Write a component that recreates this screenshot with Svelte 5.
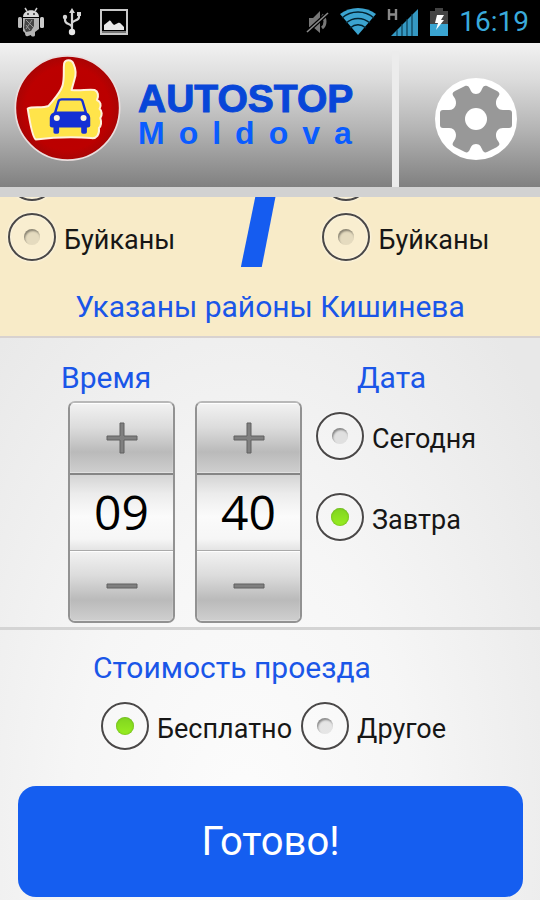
<script lang="ts">
	// Form state
	let from = '';
	let to = '';
	let hours = 9;
	let minutes = 40;
	let day = 'tomorrow';
	let price = 'free';

	const days = [
		{ value: 'today', title: 'Сегодня' },
		{ value: 'tomorrow', title: 'Завтра' }
	];

	const prices = [
		{ value: 'free', title: 'Бесплатно' },
		{ value: 'other', title: 'Другое' }
	];

	// One quarter of the gear, mirrored into the other three
	const gearQuarter =
		'M-1 1V-25H0C4-25 5-28 6-30C7-33 9-34 11-33L21-28C24-26 24-25 22-22C18-17 20-9 27-9H33Q36-9 36-6V1Z';

	const pad = (n: number) => String(n).padStart(2, '0');

	function changeHours(step: number) {
		hours = (hours + step + 24) % 24;
	}

	function changeMinutes(step: number) {
		minutes = (minutes + step + 60) % 60;
	}
</script>

<div class="screen">
	<!-- Status bar -->
	<div class="status-bar">
		<div class="status-left">
			<svg width="26" height="30" viewBox="0 0 26 30">
				<path d="M7 1l2 3M19 1l-2 3" stroke="#ccc" stroke-width="1.5" />
				<path d="M5 10c0-9 16-9 16 0z" fill="#d8d8d8" />
				<rect x="0" y="10" width="4" height="11" rx="1.5" fill="#bbb" />
				<rect x="22" y="10" width="4" height="11" rx="1.5" fill="#ccc" />
				<path d="M5 11h16v11l-4 3v3c0 2-4 2-4 0l-3 1c-2 1-3-1-3-3l-2-2z" fill="#b4b4b4" />
				<path d="M7 12h9v7l-3 5-5 1-2-4z" fill="#454545" />
				<path d="M8 13l7 7M14 13l-6 9M8 18l4 5" stroke="#999" stroke-width="1" />
				<circle cx="10" cy="7" r="1" fill="#333" />
				<circle cx="16" cy="7" r="1" fill="#333" />
			</svg>
			<svg width="20" height="28" viewBox="0 0 20 28" fill="none" stroke="#d5d5d5" stroke-width="2.2">
				<path d="M10 4v19M10 19c-1-4-7-2-7-7V9M10 15c1-3 7-2 7-6V6" />
				<path d="M10 0l3 5H7z" fill="#d5d5d5" stroke="none" />
				<circle cx="3" cy="9" r="2.2" fill="#d5d5d5" stroke="none" />
				<rect x="15" y="4" width="4" height="4" fill="#d5d5d5" stroke="none" />
				<circle cx="10" cy="24" r="3.2" fill="#e8e8e8" stroke="none" />
			</svg>
			<svg width="28" height="26" viewBox="0 0 28 26">
				<rect x="1" y="1" width="26" height="24" fill="#000" stroke="#c8c8c8" stroke-width="2" />
				<path d="M4 21v-5l5-4c1-1 2 0 3 2l2 2 4-2c2-1 3 1 6 4v3z" fill="#e8e8e8" />
				<path d="M2 23h24" stroke="#777" stroke-width="2" />
			</svg>
		</div>
		<div class="status-right">
			<svg width="23" height="24" viewBox="0 0 23 24">
				<path d="M3 8h4l7-7v22l-7-6H3z" fill="#777" />
				<path d="M16 5c4 3 4 10 0 13" fill="none" stroke="#777" stroke-width="3" />
				<path d="M1 22L22 3" stroke="#000" stroke-width="4" />
				<path d="M1 22L22 3" stroke="#8a8a8a" stroke-width="1.6" />
			</svg>
			<svg width="36" height="27" viewBox="0 0 36 27">
				<path d="M0 6c10-8 26-8 36 0L18 27z" fill="#3ba4d0" />
				<path
					d="M2 10c9-8 23-8 32 0M6 15c7-6 17-6 24 0M10 20c5-4 11-4 16 0"
					fill="none"
					stroke="#03222f"
					stroke-width="1.4"
				/>
			</svg>
			<svg width="32" height="28" viewBox="0 0 32 28">
				<path d="M2 1v11M9 1v11M2 6.5h7" stroke="#8a8a8a" stroke-width="2.4" />
				<path d="M4 28L31 1v27z" fill="#3598c2" />
				<path d="M10 22v6M15 16v12M20 11v17M25 6v22" stroke="#0a3c52" stroke-width="1.2" />
			</svg>
			<svg width="18" height="28" viewBox="0 0 18 28">
				<path d="M5 0h8v3h5v25H0V3h5z" fill="#444" />
				<path d="M0 16h18v12H0z" fill="#3aa5d2" />
				<path d="M7 7h7l-3 5h3L6 22l2-7H5z" fill="#fff" />
			</svg>
			<span class="clock">16:19</span>
		</div>
	</div>

	<!-- App header -->
	<header class="header">
		<svg class="logo" viewBox="43 43 320 322">
			<defs>
				<radialGradient id="logo-red">
					<stop offset="0" stop-color="#b80000" />
					<stop offset="0.8" stop-color="#bc0000" />
					<stop offset="1" stop-color="#a80404" />
				</radialGradient>
			</defs>
			<circle cx="203" cy="204" r="156" fill="url(#logo-red)" stroke="#eadede" stroke-width="5" />
			<path
				d="M193 70C197 58 216 58 221 72C228 88 229 104 224 118L215 150C238 153 262 148 284 150C295 154 297 168 291 180C302 184 305 196 299 206C307 213 307 226 301 234C305 246 303 258 297 264C299 284 290 296 274 294C220 290 160 292 108 298C98 292 88 232 84 206C98 198 128 206 146 198C160 180 180 162 188 138C195 112 190 90 193 70Z"
				fill="#ffe44a"
				stroke="#fff1dc"
				stroke-width="6"
				stroke-linejoin="round"
			/>
			<path
				d="M166 218L176 184Q178 178 186 178H240Q246 178 248 184L258 218Z"
				fill="#ffe44a"
				stroke="#1430d4"
				stroke-width="7"
			/>
			<path
				d="M164 216H258Q271 222 271 234V256Q271 262 264 262H157Q150 262 150 256V234Q150 222 164 216Z"
				fill="#1430d4"
			/>
			<rect x="161" y="250" width="17" height="31" rx="5" fill="#1430d4" />
			<rect x="244" y="250" width="17" height="31" rx="5" fill="#1430d4" />
			<circle cx="171" cy="234" r="9" fill="#fff6d8" />
			<circle cx="251" cy="234" r="9" fill="#fff6d8" />
		</svg>
		<div class="brand">
			<span class="brand-name">AUTOSTOP</span>
			<span class="brand-country">Moldova</span>
		</div>
		<button class="settings" aria-label="Настройки">
			<svg width="82" height="82" viewBox="-41 -41 82 82">
				<circle r="41" fill="#fff" />
				{#each ['1 1', '-1 1', '1 -1', '-1 -1'] as mirror}
					<path d={gearQuarter} fill="#989898" transform="scale({mirror})" />
				{/each}
				<circle r="11" fill="#fff" />
			</svg>
		</button>
	</header>

	<!-- Districts -->
	<section class="districts">
		<div class="route">
			<div class="list">
				<label class="option"><input type="radio" name="from" value="prev" bind:group={from} /></label>
				<label class="option">
					<input type="radio" name="from" value="buiucani" bind:group={from} />
					<span>Буйканы</span>
				</label>
			</div>
			<div class="slash"></div>
			<div class="list">
				<label class="option"><input type="radio" name="to" value="prev" bind:group={to} /></label>
				<label class="option">
					<input type="radio" name="to" value="buiucani" bind:group={to} />
					<span>Буйканы</span>
				</label>
			</div>
		</div>
		<h2>Указаны районы Кишинева</h2>
	</section>

	<!-- Time and date -->
	<section class="when">
		<div class="time">
			<h2>Время</h2>
			<div class="pickers">
				<div class="picker">
					<button aria-label="+" on:click={() => changeHours(1)}>
						<svg width="32" height="32" viewBox="0 0 32 32"><path d="M14 1h4v13h13v4H18v13h-4V18H1v-4h13z" /></svg>
					</button>
					<input type="text" aria-label="Время" readonly value={pad(hours)} />
					<button aria-label="−" on:click={() => changeHours(-1)}>
						<svg width="32" height="32" viewBox="0 0 32 32"><path d="M1 14h30v4H1z" /></svg>
					</button>
				</div>
				<div class="picker">
					<button aria-label="+" on:click={() => changeMinutes(1)}>
						<svg width="32" height="32" viewBox="0 0 32 32"><path d="M14 1h4v13h13v4H18v13h-4V18H1v-4h13z" /></svg>
					</button>
					<input type="text" aria-label="Время" readonly value={pad(minutes)} />
					<button aria-label="−" on:click={() => changeMinutes(-1)}>
						<svg width="32" height="32" viewBox="0 0 32 32"><path d="M1 14h30v4H1z" /></svg>
					</button>
				</div>
			</div>
		</div>
		<div class="date">
			<h2>Дата</h2>
			{#each days as item}
				<label class="option">
					<input type="radio" name="day" value={item.value} bind:group={day} />
					<span>{item.title}</span>
				</label>
			{/each}
		</div>
	</section>

	<!-- Price -->
	<section class="cost">
		<h2>Стоимость проезда</h2>
		<div class="prices">
			{#each prices as item}
				<label class="option">
					<input type="radio" name="price" value={item.value} bind:group={price} />
					<span>{item.title}</span>
				</label>
			{/each}
		</div>
	</section>

	<div class="footer">
		<button class="submit">Готово!</button>
	</div>
</div>

<style>
	:global(body) {
		margin: 0;
		font-family: Roboto, sans-serif;
		background: #e8e8e8;
	}

	.screen {
		min-height: 100vh;
		box-sizing: border-box;
		background: radial-gradient(ellipse 70% 75% at 45% 92%, #fcfcfc 0%, #f6f6f6 45%, #e8e8e8 100%);
		color: #161616;
	}

	h2 {
		margin: 0;
		font-size: 30px;
		line-height: 36px;
		font-weight: 400;
		color: #1a56e8;
	}

	button {
		border: none;
		padding: 0;
		font-family: inherit;
		cursor: pointer;
	}

	/* --- Status bar --- */
	.status-bar {
		display: flex;
		justify-content: space-between;
		align-items: center;
		height: 43px;
		padding: 0 11px 0 18px;
		background: #000;
	}

	.status-left,
	.status-right {
		display: flex;
		align-items: center;
	}

	.status-left {
		gap: 18px;
	}

	.status-right {
		gap: 11px;
	}

	.clock {
		font-size: 28px;
		line-height: 32px;
		color: #3aaadb;
	}

	/* --- Header --- */
	.header {
		display: flex;
		align-items: center;
		height: 144px;
		border-bottom: 10px solid #d2d2d2;
		background: linear-gradient(#f2f2f2, #dcdcdc 25%, #b4b4b4 60%, #808080);
	}

	.logo {
		width: 107px;
		height: 108px;
		margin: 0 17px 14px 14px;
	}

	.brand {
		display: flex;
		flex: 1;
		flex-direction: column;
		font-family: 'Liberation Sans', Arial, sans-serif;
		font-weight: 700;
	}

	.brand-name {
		font-size: 39px;
		line-height: 36px;
		color: #0846d8;
		-webkit-text-stroke: 1px #0846d8;
	}

	.brand-country {
		font-size: 32px;
		line-height: 32px;
		letter-spacing: 14px;
		color: #0a5cff;
	}

	.settings {
		display: flex;
		align-items: center;
		align-self: flex-end;
		height: 136px;
		padding: 0 23px 0 36px;
		border-left: 7px solid #ececec;
		background: none;
	}

	/* --- Radio options --- */
	.option {
		display: flex;
		align-items: center;
		gap: 8px;
		font-size: 27px;
		line-height: 32px;
		cursor: pointer;
	}

	.option span {
		padding-top: 6px;
	}

	.option input {
		appearance: none;
		flex: none;
		display: grid;
		place-items: center;
		width: 48px;
		height: 48px;
		margin: 0;
		border: 2px solid #4a4848;
		border-radius: 50%;
		background: rgba(255, 255, 255, 0.15);
		box-shadow: 0 0 3px #fff, inset 0 0 2px #fff;
	}

	.option input::before {
		content: '';
		width: 16px;
		height: 16px;
		border-radius: 50%;
		background: rgba(0, 0, 0, 0.08);
		box-shadow: inset 1px 2px 2px rgba(0, 0, 0, 0.4);
	}

	.option input:checked::before {
		width: 18px;
		height: 18px;
		background: linear-gradient(#80d420, #98ee20);
		box-shadow: inset 0 0 2px #5a9a1a;
	}

	/* --- Districts --- */
	.districts {
		padding-bottom: 11px;
		border-bottom: 2px solid #d8d2d0;
		background: #f8ebc8;
		text-align: center;
	}

	.districts h2 {
		padding-top: 22px;
	}

	.route {
		display: grid;
		grid-template-columns: 20fr 7fr 18fr;
		height: 70px;
		padding: 0 8px;
		overflow: hidden;
	}

	.list {
		display: flex;
		flex-direction: column;
		justify-content: flex-end;
		height: 70px;
	}

	.list .option {
		flex: none;
		height: 60px;
	}

	.slash {
		width: 36px;
		height: 70px;
		background: #155cf0;
		clip-path: polygon(40% 0, 96% 0, 58% 100%, 0 100%);
	}

	/* --- Time and date --- */
	.when {
		display: flex;
		gap: 14px;
		padding: 22px 0 4px 61px;
		border-bottom: 3px solid #d4d4d4;
	}

	.pickers {
		display: flex;
		gap: 20px;
		padding: 5px 0 0 7px;
	}

	.picker {
		display: flex;
		flex-direction: column;
		width: 107px;
		box-sizing: border-box;
		border: 2px solid #929292;
		border-top-color: #b8b8b8;
		border-radius: 7px;
		overflow: hidden;
	}

	.picker button {
		display: grid;
		place-items: center;
		height: 70px;
		background: linear-gradient(#f2f2f2, #dcdcdc 35%, #bababa 70%, #cfcfcf);
		box-shadow: inset 0 1px 1px #fff, inset 0 -1px 0 #e0e0e0;
	}

	.picker path {
		fill: #808080;
		stroke: #606060;
		stroke-width: 1;
	}

	.picker input {
		width: 100%;
		height: 78px;
		box-sizing: border-box;
		padding: 0 0 2px;
		border: none;
		border-top: 2px solid #858585;
		border-bottom: 1px solid #aaa;
		background: linear-gradient(#d4d4d4, #ececec 25%, #fbfbfb 55%, #f6f6f6 85%, #e4e4e4);
		font-family: 'Open Sans', 'Noto Sans', sans-serif;
		font-size: 48px;
		text-align: center;
		color: #000;
	}

	.date h2 {
		padding-left: 41px;
	}

	.date .option {
		margin-top: 16px;
		margin-bottom: 33px;
	}

	/* --- Price --- */
	.cost {
		padding: 20px 0 0 93px;
	}

	.prices {
		display: flex;
		gap: 9px;
		padding: 16px 0 0 8px;
	}

	/* --- Submit --- */
	.footer {
		padding: 36px 17px 3px 18px;
	}

	.submit {
		width: 100%;
		height: 111px;
		border-radius: 18px;
		background: #155ef0;
		font-size: 40px;
		line-height: 48px;
		color: #fff;
	}
</style>
